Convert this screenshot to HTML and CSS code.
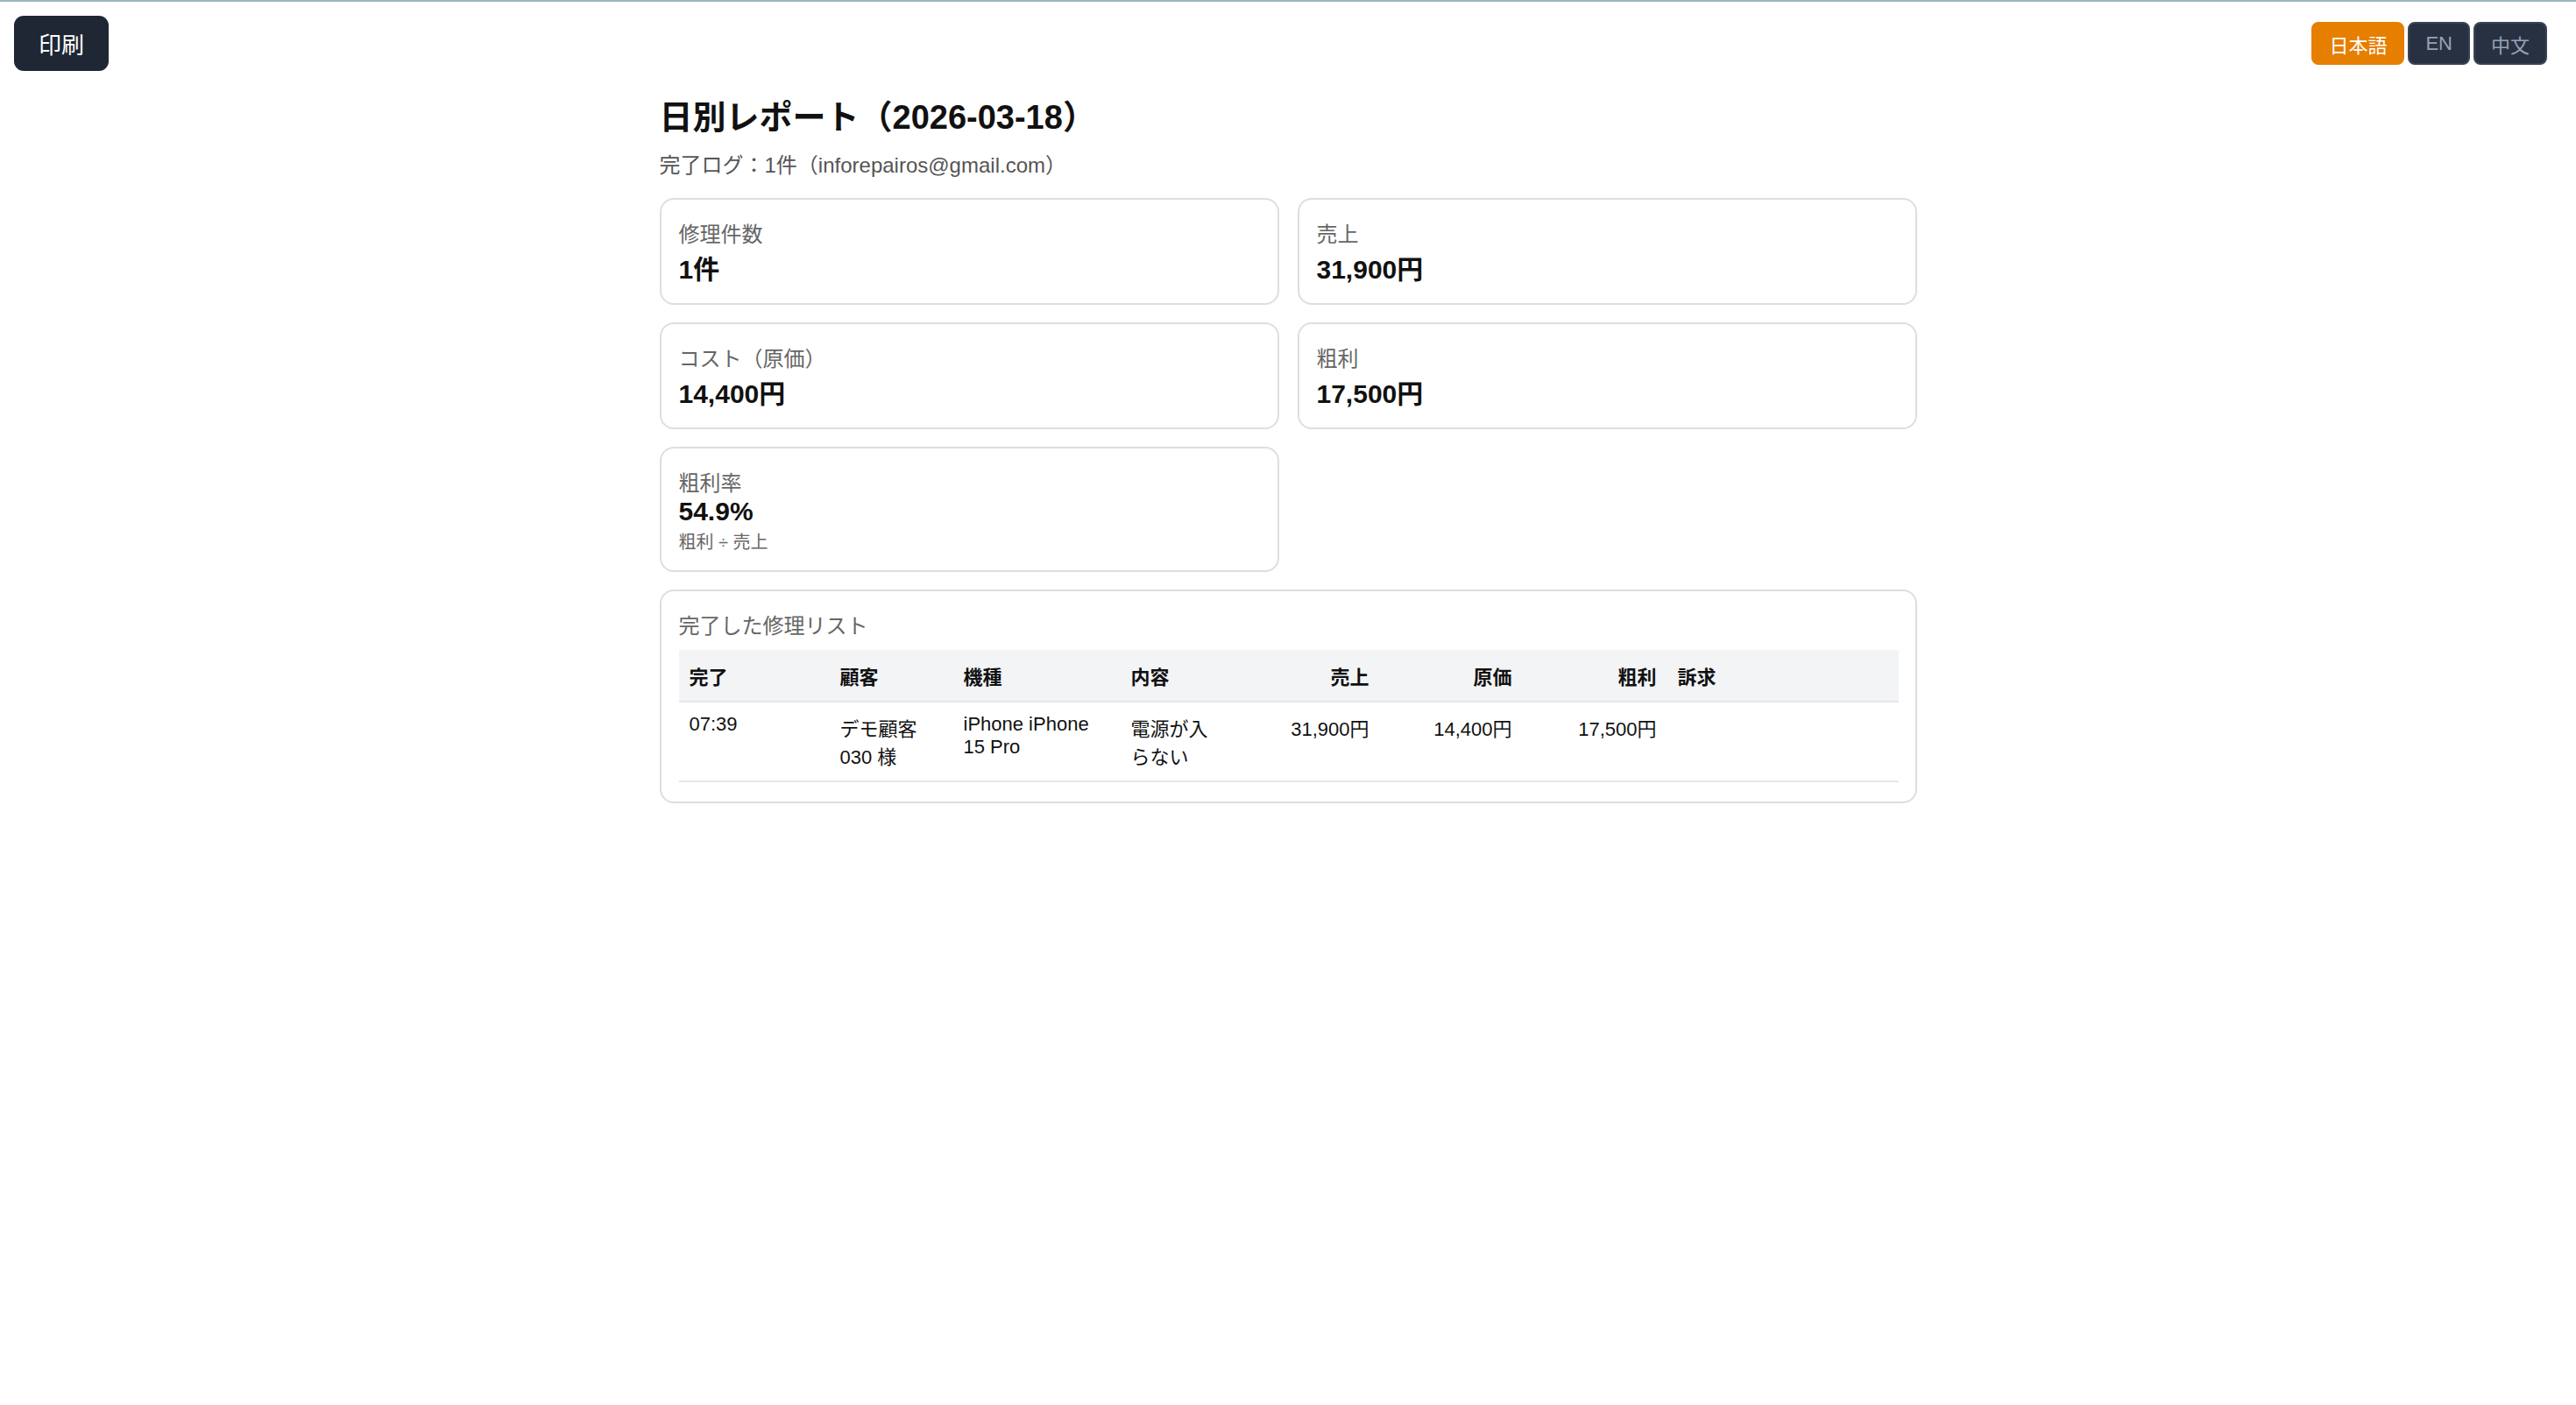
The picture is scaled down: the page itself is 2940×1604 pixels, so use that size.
FILE: index.html
```html
<!DOCTYPE html>
<html lang="ja">
<head>
<meta charset="utf-8">
<title>日別レポート</title>
<link rel="stylesheet" href="styles.css">
</head>
<body>
<div class="topline"></div>
<header class="toolbar">
  <button class="print-btn">印刷</button>
  <div class="lang">
    <button class="lang-btn active">日本語</button>
    <button class="lang-btn">EN</button>
    <button class="lang-btn">中文</button>
  </div>
</header>
<main class="report">
  <h1 class="title">日別レポート（2026-03-18）</h1>
  <p class="subtitle">完了ログ：1件（inforepairos@gmail.com）</p>
  <div class="grid">
    <div class="card">
      <div class="label">修理件数</div>
      <div class="value">1件</div>
    </div>
    <div class="card">
      <div class="label">売上</div>
      <div class="value">31,900円</div>
    </div>
    <div class="card">
      <div class="label">コスト（原価）</div>
      <div class="value">14,400円</div>
    </div>
    <div class="card">
      <div class="label">粗利</div>
      <div class="value">17,500円</div>
    </div>
    <div class="card">
      <div class="label">粗利率</div>
      <div class="value">54.9%</div>
      <div class="note">粗利 ÷ 売上</div>
    </div>
    <div class="card card-wide">
      <div class="label">完了した修理リスト</div>
      <table class="list">
        <colgroup>
          <col class="w1"><col class="w2"><col class="w3"><col class="w4">
          <col class="w5"><col class="w6"><col class="w7"><col class="w8">
        </colgroup>
        <thead>
          <tr>
            <th>完了</th><th>顧客</th><th>機種</th><th>内容</th>
            <th class="num">売上</th><th class="num">原価</th><th class="num">粗利</th><th>訴求</th>
          </tr>
        </thead>
        <tbody>
          <tr>
            <td>07:39</td>
            <td>デモ顧客 030 様</td>
            <td>iPhone iPhone 15 Pro</td>
            <td>電源が入らない</td>
            <td class="num">31,900円</td>
            <td class="num">14,400円</td>
            <td class="num">17,500円</td>
            <td></td>
          </tr>
        </tbody>
      </table>
    </div>
  </div>
</main>
</body>
</html>
```

FILE: styles.css
```css
* { box-sizing: border-box; }

html, body {
  margin: 0;
  padding: 0;
  background: #ffffff;
}

body {
  font-family: "Liberation Sans", "Noto Sans CJK JP", sans-serif;
  color: #111111;
}

.topline {
  height: 2px;
  background: #9ab7bc;
}

.toolbar {
  display: flex;
  justify-content: space-between;
  align-items: center;
  padding: 16px 33px 0 16px;
}

.print-btn {
  font-family: inherit;
  font-size: 26px;
  color: #ffffff;
  background: #1f2735;
  border: none;
  border-radius: 11px;
  width: 108px;
  height: 63px;
  padding: 0;
  cursor: pointer;
}

.lang {
  display: flex;
  gap: 4px;
}

.lang-btn {
  font-family: inherit;
  font-size: 22px;
  height: 49px;
  padding: 0 18px;
  border-radius: 8px;
  border: 2px solid #3a4456;
  background: #283142;
  color: #94a3b8;
  cursor: pointer;
}

.lang-btn.active {
  background: #e67e00;
  border-color: #e67e00;
  color: #ffffff;
}

.report {
  width: 1435px;
  margin: 22px auto 0;
}

.title {
  margin: 0;
  font-size: 38px;
  font-weight: 700;
  line-height: normal;
  color: #111111;
}

.subtitle {
  margin: 11px 0 22px;
  font-size: 24px;
  color: #555555;
}

.grid {
  display: grid;
  grid-template-columns: 1fr 1fr;
  column-gap: 21px;
  row-gap: 20px;
  align-items: start;
}

.card {
  border: 2px solid #dedede;
  border-radius: 16px;
  padding: 20px 20px 19px;
  background: #ffffff;
}

.card-wide {
  grid-column: 1 / span 2;
  padding-bottom: 22px;
}

.label {
  font-size: 24px;
  color: #666666;
}

.value {
  font-size: 30px;
  font-weight: 700;
  color: #111111;
}

.note {
  margin-top: 2px;
  font-size: 20px;
  color: #666666;
}

.list {
  width: 100%;
  table-layout: fixed;
  border-collapse: collapse;
  margin-top: 12px;
  font-size: 22px;
  color: #111111;
}

.w1 { width: 172px; }
.w2 { width: 141px; }
.w3 { width: 191px; }
.w4 { width: 132px; }
.w5 { width: 164px; }
.w6 { width: 163px; }
.w7 { width: 165px; }
.w8 { width: 264px; }

.list th {
  background: #f3f4f6;
  font-weight: 700;
  text-align: left;
  padding: 13px 12px;
  border-bottom: 2px solid #e5e7eb;
}

.list td {
  vertical-align: top;
  text-align: left;
  padding: 12px 12px 13px;
  border-bottom: 2px solid #e5e7eb;
}

.list .num {
  text-align: right;
}
```
